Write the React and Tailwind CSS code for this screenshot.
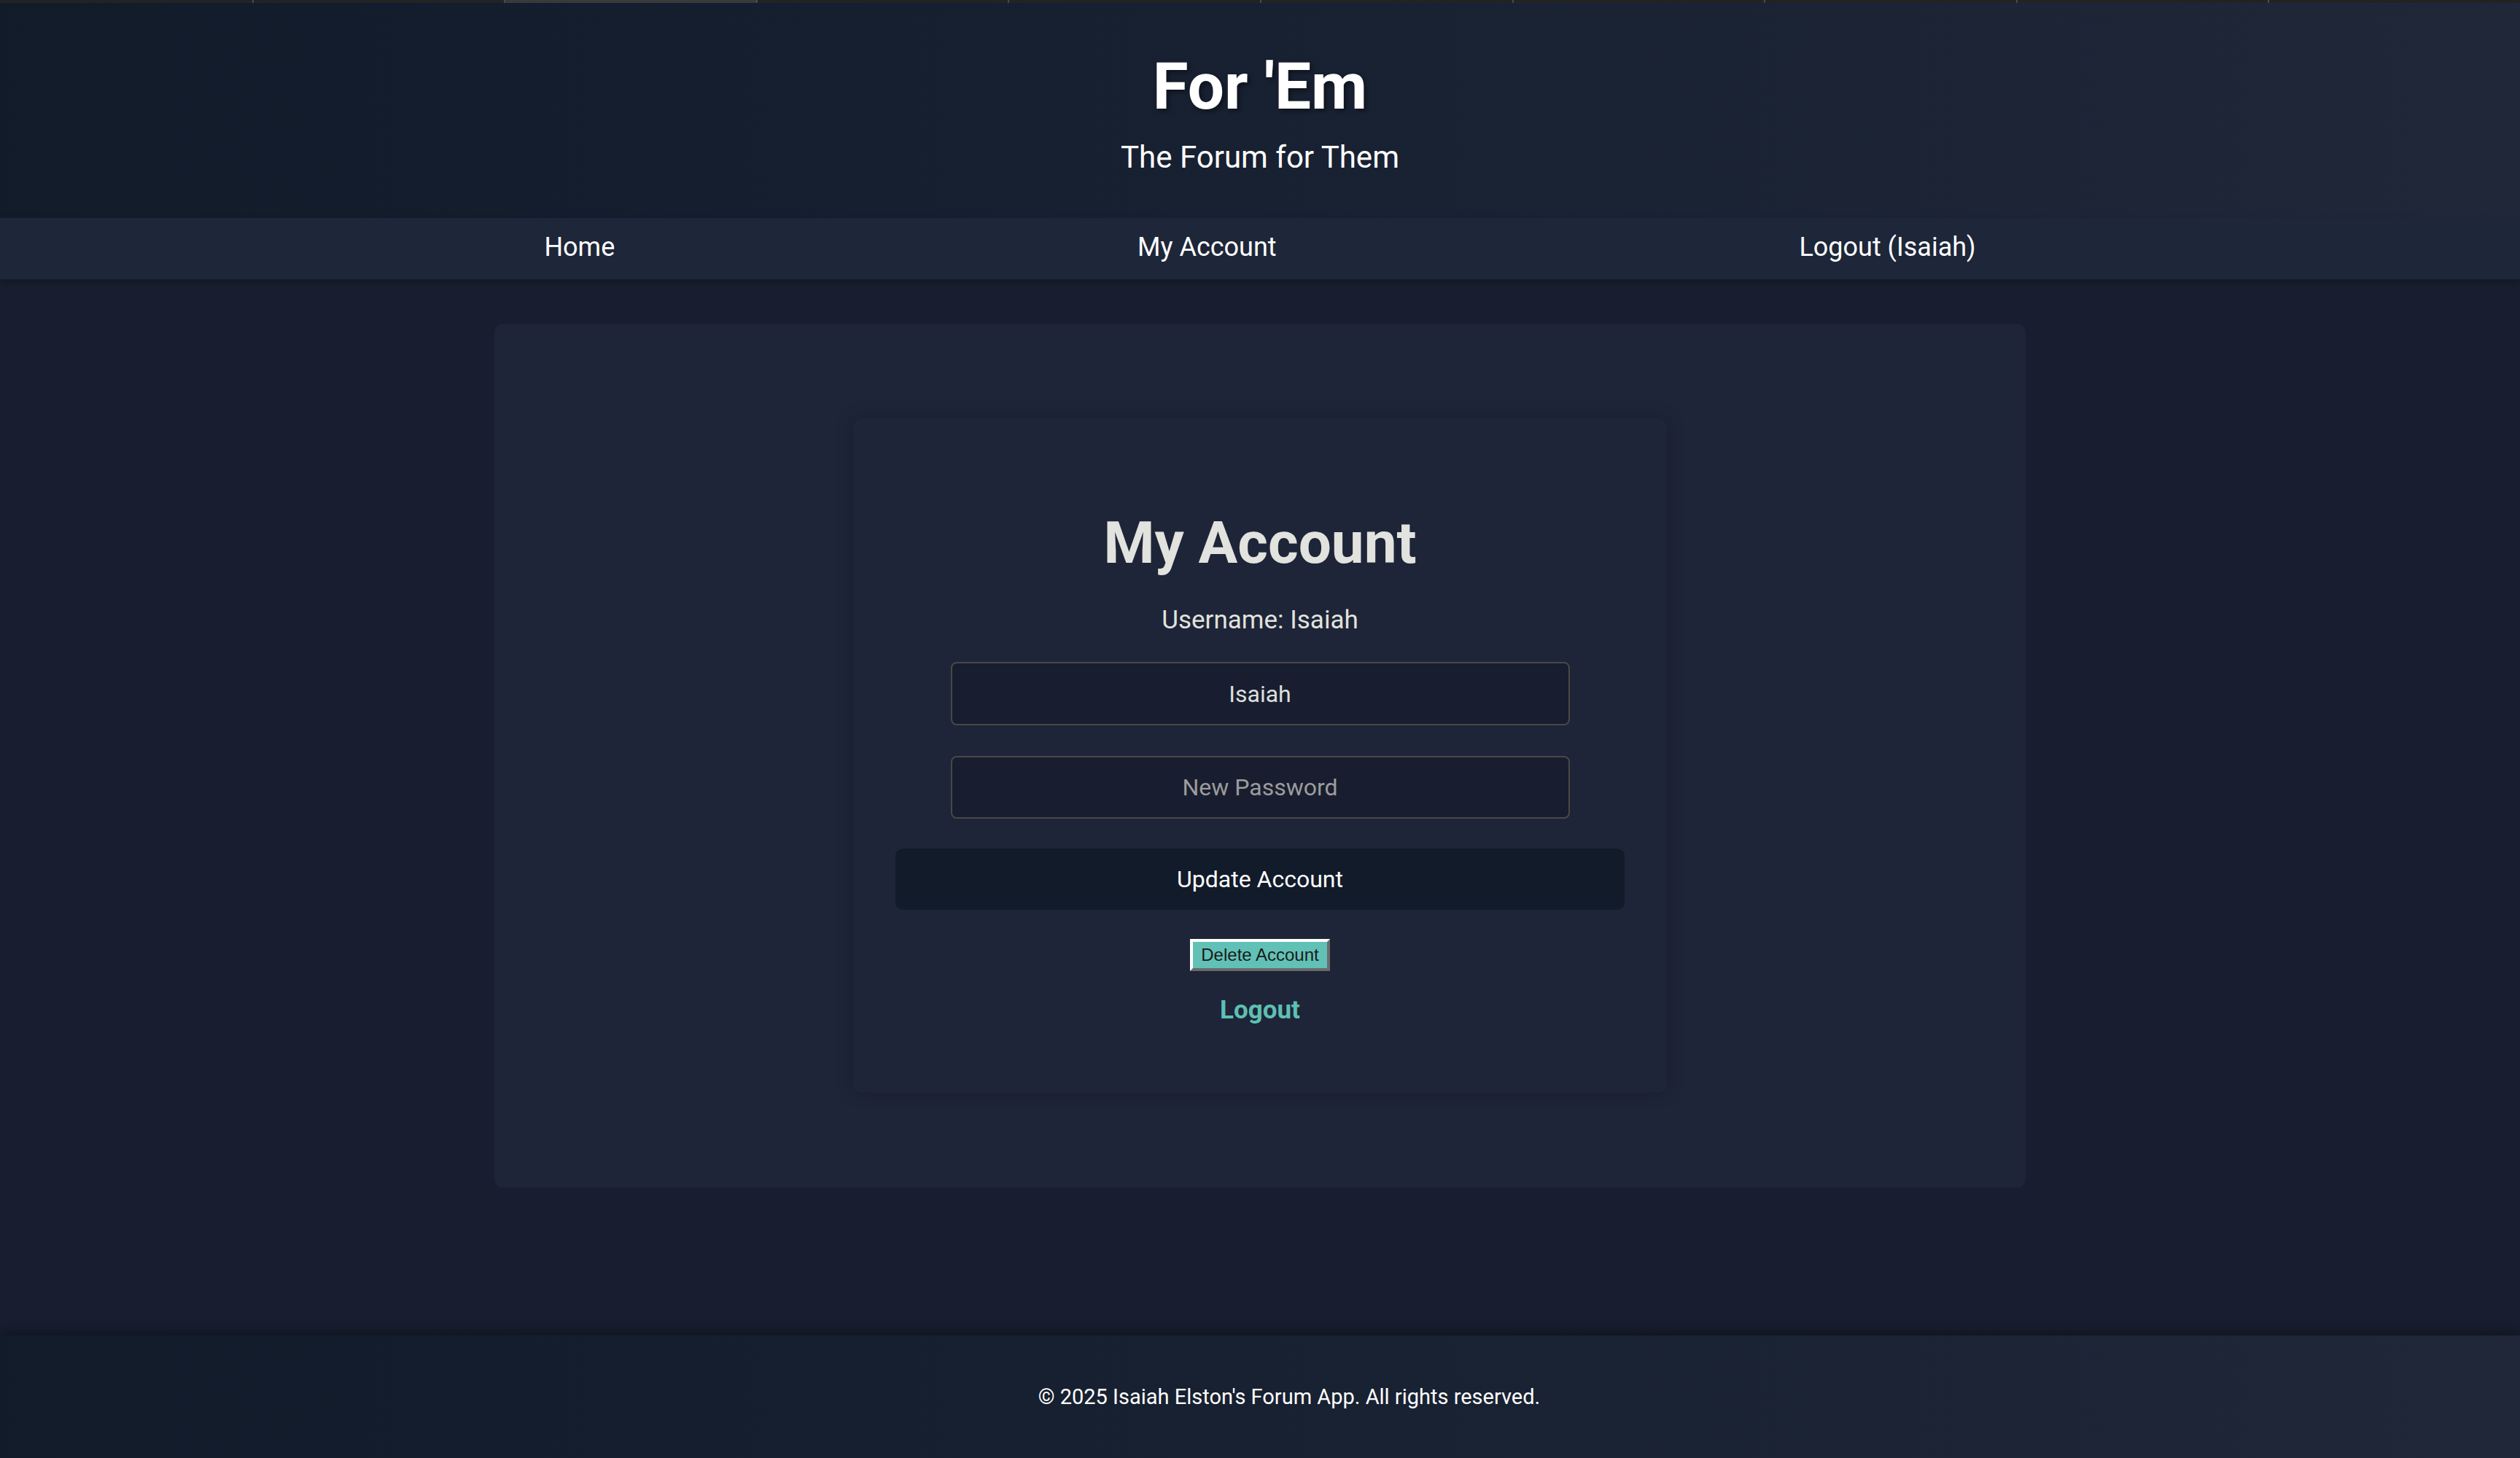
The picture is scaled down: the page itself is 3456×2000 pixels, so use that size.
const TABS = Array.from({ length: 10 });

function TabStrip() {
  return (
    <div className="grid grid-cols-10 h-[4px] bg-[#222322]">
      {TABS.map((_, i) => (
        <div
          key={i}
          className={
            i === 2
              ? "bg-[#3a3a3a] border-l-2 border-[#4a4a4a]"
              : i === 0
              ? "bg-[#222322]"
              : "bg-[#222322] border-l-2 border-[#4a4a4a]"
          }
        />
      ))}
    </div>
  );
}

export default function App() {
  return (
    <div className="min-h-screen flex flex-col bg-[#181e2f] font-['Roboto',sans-serif] text-white">
      <TabStrip />

      {/* Site header */}
      <header className="bg-gradient-to-r from-[#111b2a] to-[#1f2739] text-center pt-[70px] pb-[62px]">
        <h1 className="text-[89px] leading-none font-bold [text-shadow:3px_3px_6px_rgba(0,0,0,0.45)]">For 'Em</h1>
        <p className="mt-[32px] text-[42px] leading-none">The Forum for Them</p>
      </header>

      <nav className="relative z-10 h-[84px] bg-[#1e2639] shadow-[0_4px_8px_rgba(0,0,0,0.25)] pb-[4px]">
        <ul className="w-[2680px] mx-auto h-full flex items-center justify-around text-[36px] leading-none">
          <li>Home</li>
          <li>My Account</li>
          <li>Logout (Isaiah)</li>
        </ul>
      </nav>

      <main className="flex-1 pt-[61px]">
        <section className="w-[2100px] mx-auto rounded-[12px] bg-[#1e2538] py-[130px] flex justify-center">
          <div className="w-[1116px] rounded-[12px] bg-[#1e2538] shadow-[0_0_24px_rgba(0,0,0,0.22)] flex flex-col items-center pt-[131px] pb-[96px]">
            <h2 className="text-[80px] leading-none font-bold text-[#e2e2de]">My Account</h2>
            <p className="mt-[48px] text-[35px] leading-none text-[#e2e2de]">Username: Isaiah</p>

            <input
              defaultValue="Isaiah"
              className="mt-[40px] w-[849px] h-[87px] rounded-[8px] border-2 border-[#484848] bg-[#181e2f] text-center text-[32px] text-[#dedede] outline-none"
            />
            <input
              type="password"
              placeholder="New Password"
              className="mt-[42px] w-[849px] h-[86px] rounded-[8px] border-2 border-[#484848] bg-[#181e2f] text-center text-[32px] text-[#dedede] placeholder:text-[#9c9c9c] outline-none"
            />

            <button className="mt-[41px] w-[1000px] h-[84px] rounded-[10px] bg-[#111b2a] text-[32px] text-white">
              Update Account
            </button>

            <button className="mt-[40px] w-[192px] h-[44px] bg-[#62c1b6] border-4 border-t-white border-l-white border-b-[#6b6b6b] border-r-[#6b6b6b] font-['Liberation_Sans',sans-serif] text-[24px] text-[#1a1a1a] leading-none">
              Delete Account
            </button>

            <a className="mt-[36px] text-[35px] leading-none font-bold text-[#5ebfb3]">Logout</a>
          </div>
        </section>
      </main>

      <footer className="relative h-[168px] bg-gradient-to-r from-[#111b2a] to-[#1f2739] shadow-[0_-6px_14px_rgba(0,0,0,0.3)] pt-[70px] pl-[80px] text-center text-[29px] leading-none">
        © 2025 Isaiah Elston's Forum App. All rights reserved.
      </footer>
    </div>
  );
}
